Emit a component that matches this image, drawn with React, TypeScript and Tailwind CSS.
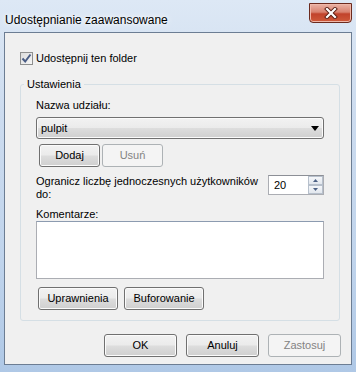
import React from "react";

const btn =
  "h-[23px] border border-[#707070] rounded-[3px] bg-[linear-gradient(180deg,#f2f2f2_0%,#ebebeb_48%,#dddddd_52%,#cfcfcf_100%)] shadow-[inset_0_0_0_1px_#fbfbfb] text-[11px] text-black flex items-center justify-center";
const btnDisabled =
  "h-[23px] border border-[#adb2b5] rounded-[3px] bg-[#f4f4f4] text-[11px] text-[#838383] flex items-center justify-center";

const CloseGlyph = () => (
  <svg width="14" height="12" viewBox="0 0 14 12">
    <path d="M3 2L11 10M11 2L3 10" stroke="#5a1d12" strokeWidth="4" strokeLinecap="square" />
    <path d="M3 2L11 10M11 2L3 10" stroke="#ffffff" strokeWidth="2.2" strokeLinecap="square" />
  </svg>
);

export default function App() {
  return (
    <div
      className="w-[356px] h-[372px] flex flex-col bg-[linear-gradient(180deg,#dde8f5_0%,#cddcef_30%,#c0d4ec_70%,#afc8e6_100%)] overflow-hidden"
      style={{ fontFamily: '"Liberation Sans", Arial, sans-serif' }}
    >
      {/* title bar */}
      <div className="h-[32px] flex items-start shrink-0">
        <div className="pl-[5px] pt-[12px] text-[12px] leading-[16px] text-black [text-shadow:0_0_8px_#ffffff,0_0_4px_#ffffff]">
          Udostępnianie zaawansowane
        </div>
        <div className="ml-auto mr-[4px] mt-[3px] w-[43px] h-[20px] rounded-b-[4px] border border-[#6b2a1e] bg-[linear-gradient(180deg,#eab3a6_0%,#d9826f_45%,#c1432b_55%,#cf5a3a_100%)] shadow-[inset_0_0_0_1px_#f0b7a8] flex items-center justify-center">
          <CloseGlyph />
        </div>
      </div>

      {/* client area */}
      <div className="mx-[4px] h-[333px] border border-[#6c7d93] bg-[#f0f0f0] flex flex-col text-[11px] text-black">
        <label className="mt-[19px] ml-[15px] flex items-center gap-[3px] h-[13px]">
          <span className="w-[13px] h-[13px] border border-[#8e8f8f] bg-[linear-gradient(135deg,#dcdcdc_0%,#f6f6f6_100%)] flex items-center justify-center">
            <svg width="11" height="11" viewBox="0 0 11 11">
              <path d="M1.5 5.5L4.2 8.5L9.5 1.5" stroke="#4a5d85" strokeWidth="2" fill="none" />
            </svg>
          </span>
          <span className="leading-[15px]">Udostępnij ten folder</span>
        </label>

        <fieldset className="mt-[12px] ml-[15px] w-[320px] h-[244px] border border-[#d5dfe5] rounded-[3px] px-[15px] pt-[6px] flex flex-col">
          <legend className="ml-[-12px] px-[3px] leading-[15px]">Ustawienia</legend>
          <div className="leading-[15px]">Nazwa udziału:</div>
          <div className="mt-[4px] h-[22px] border border-[#707070] rounded-[3px] bg-[linear-gradient(180deg,#f2f2f2_0%,#ebebeb_48%,#dddddd_52%,#cfcfcf_100%)] shadow-[inset_0_0_0_1px_#fbfbfb] flex items-center pl-[4px] pr-[4px]">
            <span className="flex-1">pulpit</span>
            <svg width="8" height="5" viewBox="0 0 8 5">
              <path d="M0 0H8L4 5Z" fill="#000000" />
            </svg>
          </div>
          <div className="mt-[5px] ml-[3px] flex gap-[2px]">
            <div className={`${btn} w-[61px]`}>Dodaj</div>
            <div className={`${btnDisabled} w-[61px]`}>Usuń</div>
          </div>
          <div className="mt-[8px] flex items-start">
            <div className="w-[222px] leading-[13px]">Ogranicz liczbę jednoczesnych użytkowników do:</div>
            <div className="ml-auto w-[56px] h-[20px] border border-[#abadb3] border-t-[#8c8f96] bg-white flex">
              <span className="flex-1 pl-[5px] leading-[18px]">20</span>
              <div className="w-[15px] flex flex-col">
                <div className="h-[9px] border border-[#b7c0cc] bg-[linear-gradient(180deg,#f5f7fa_0%,#e2e7ee_100%)] flex items-center justify-center">
                  <svg width="5" height="3" viewBox="0 0 5 3"><path d="M0 3H5L2.5 0Z" fill="#4d6185" /></svg>
                </div>
                <div className="h-[9px] border border-[#b7c0cc] bg-[linear-gradient(180deg,#f5f7fa_0%,#e2e7ee_100%)] flex items-center justify-center">
                  <svg width="5" height="3" viewBox="0 0 5 3"><path d="M0 0H5L2.5 3Z" fill="#4d6185" /></svg>
                </div>
              </div>
            </div>
          </div>
          <div className="mt-[6px] leading-[14px]">Komentarze:</div>
          <div className="h-[58px] border border-[#abadb3] border-t-[#8c9bb0] bg-white"></div>
          <div className="mt-[8px] ml-[2px] flex gap-[6px]">
            <div className={`${btn} w-[80px]`}>Uprawnienia</div>
            <div className={`${btn} w-[80px]`}>Buforowanie</div>
          </div>
        </fieldset>

        <div className="mt-[13px] mr-[10px] flex justify-end gap-[9px]">
          <div className={`${btn} w-[73px] h-[21px] border-[#3c7fb1] shadow-[inset_0_0_0_1px_#a7dcf5]`}>OK</div>
          <div className={`${btn} w-[73px] h-[21px]`}>Anuluj</div>
          <div className={`${btnDisabled} w-[73px] h-[21px]`}>Zastosuj</div>
        </div>
      </div>
    </div>
  );
}
